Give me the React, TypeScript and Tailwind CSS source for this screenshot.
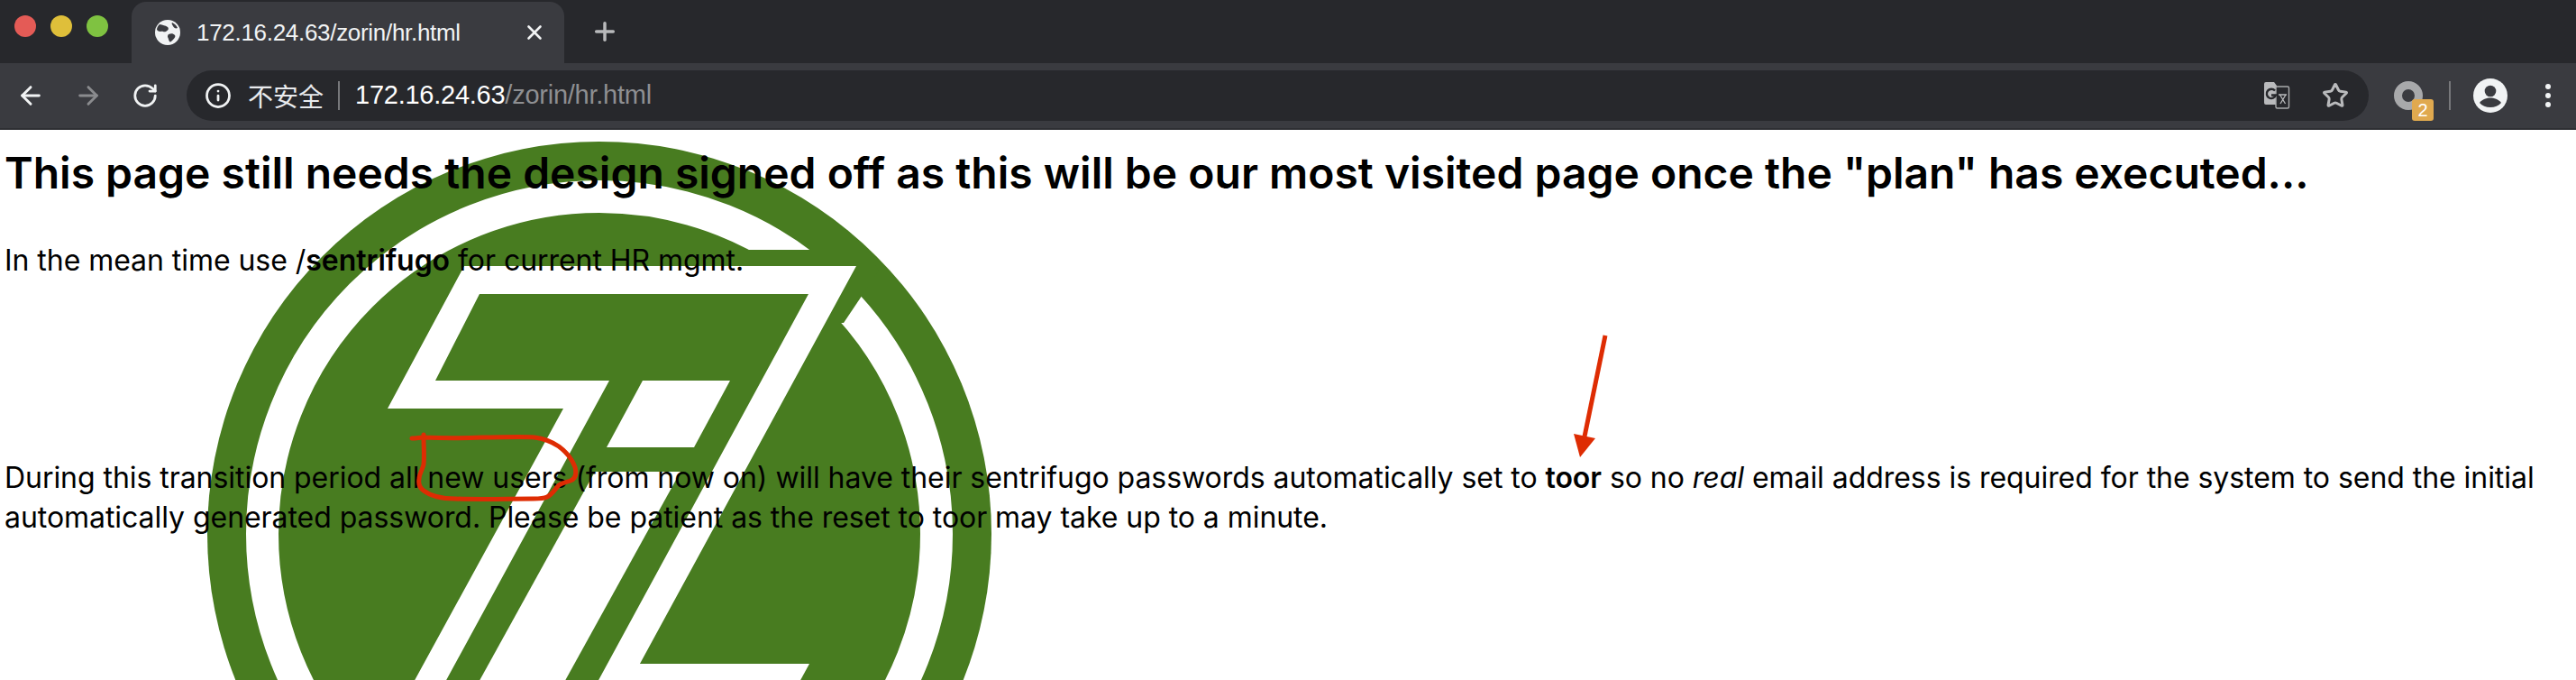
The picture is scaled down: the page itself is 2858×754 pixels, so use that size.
import React from "react";
import { ArrowLeft, ArrowRight, RotateCw, Star, X, Plus, Info } from "lucide-react";

const GREEN = "#487c20";
const RED = "#de2c03";

const GlobeIcon = () => (
  <svg width="28" height="28" viewBox="0 0 28 28" className="shrink-0">
    <circle cx="14" cy="14" r="14" fill="#f1f3f4" />
    <path d="M5 5c4 1 6 1 9 3 2 2 0 4-2 5-3 1-3-1-6 0-2 0-3-1-4-2 0-2 1-4 3-6z" fill="#3a3b40" />
    <path d="M15 16c3-1 5-1 7 1 1 1 0 3-2 5-2 2-3 3-4 2-1-2-1-3-2-5 0-1 0-2 1-3zM19 3c2 1 5 3 6 6-2 1-4 0-5-2s-2-3-1-4z" fill="#3a3b40" />
  </svg>
);

const TranslateIcon = () => (
  <svg width="30" height="30" viewBox="0 0 30 30">
    <path d="M1 2a2 2 0 0 1 2-2h9l3 4v21H3a2 2 0 0 1-2-2z" fill="#b9babc" />
    <rect x="14" y="5" width="14.500" height="24" rx="1.500" fill="#27282c" stroke="#a9aaac" strokeWidth="1.400" />
    <path d="M13 9.500a5.200 5.200 0 1 0 1 5h-5" fill="none" stroke="#27282c" strokeWidth="2.400" />
    <path d="M17 14h9M18.500 14l6 10M25 14l-6 10" stroke="#b9babc" strokeWidth="1.300" fill="none" />
  </svg>
);

const AvatarIcon = () => (
  <svg width="38" height="38" viewBox="0 0 38 38">
    <circle cx="19" cy="19" r="19" fill="#f1f3f4" />
    <circle cx="19" cy="14" r="6.300" fill="#3a3b40" />
    <path d="M7 27c3-4 8-5.500 12-5.500s9 1.500 12 5.500c-3 3.500-7 5-12 5s-9-1.500-12-5z" fill="#3a3b40" />
  </svg>
);

const PageArt = () => (
  <svg
    width="2858"
    height="610"
    viewBox="0 144 2858 610"
    className="absolute left-0 top-0"
  >
    <circle cx="665" cy="592" r="435" fill={GREEN} />
    <circle cx="665" cy="592" r="374" fill="none" stroke="#fff" strokeWidth="36" />
    <polygon points="827,277 960,277 975,300 936,358 827,358" fill={GREEN} />
    <polygon
      points="515,295 950,295 686,780 650,780 897,326 532,326 483,422 676,422 481,780 446,780 625,453 430,453"
      fill="#fff"
    />
    <polygon points="713,422 810,422 770,496 673,496" fill="#fff" />
    <polygon points="660,523 755,523 613,780 518,780" fill="#fff" />
    <polygon points="708,736 898,736 874,780 680,780" fill="#fff" />
  </svg>
);

const Annotations = () => (
  <svg
    width="2858"
    height="610"
    viewBox="0 144 2858 610"
    className="absolute left-0 top-0 z-20"
  >
    <path
      d="M457 486c5 0 9-1 13-1 20 1 45 1 65 0 20 0 45-1 58 0 9 1 18 4 27 10 8 6 14 12 18 23 2 8 0 13-5 15-5 2-9 2-13 5-4 4-7 10-13 13-4 2-9 2-15 2-25 0-60 1-87 0-15 0-27-3-35-9-4-3-6-8-5-13 0-5 4-11 5-16 1-10 0-20 0-30v-3"
      fill="none"
      stroke={RED}
      strokeWidth="5"
      strokeLinecap="round"
    />
    <line x1="1781" y1="372" x2="1758" y2="484" stroke={RED} strokeWidth="5" />
    <polygon points="1746,481 1770,486 1753,507" fill={RED} />
  </svg>
);

export default function App() {
  return (
    <div className="w-[2858px] h-[754px] overflow-hidden bg-white font-['Liberation_Sans',sans-serif]">
      {/* tab strip */}
      <div className="h-[70px] bg-[#27282c] flex items-end">
        <div className="flex items-center gap-[16px] pl-[16px] w-[146px] h-[70px] pb-[12px]">
          <span className="w-[24px] h-[24px] rounded-full bg-[#e45b56]" />
          <span className="w-[24px] h-[24px] rounded-full bg-[#dfbf3a]" />
          <span className="w-[24px] h-[24px] rounded-full bg-[#7fc241]" />
        </div>
        <div className="w-[480px] h-[68px] bg-[#3a3b40] rounded-t-[16px] flex items-center pl-[26px] pr-[20px] text-[#f1f3f4]">
          <GlobeIcon />
          <span className="ml-[18px] text-[26px] tracking-[-0.3px] whitespace-nowrap">
            172.16.24.63/zorin/hr.html
          </span>
          <X className="ml-auto" size={26} strokeWidth={2.4} />
        </div>
        <div className="h-[70px] flex items-center pl-[29px]">
          <Plus color="#b8b9bb" size={32} strokeWidth={2.6} />
        </div>
      </div>

      {/* toolbar */}
      <div className="h-[74px] bg-[#3a3b40] flex items-center border-b-[2px] border-[#2e2f33]">
        <div className="w-[207px] flex items-center pl-[18px] gap-[32px] text-[#f1f3f4]">
          <ArrowLeft size={32} strokeWidth={2.2} />
          <ArrowRight size={32} strokeWidth={2.2} color="#8a8b8e" />
          <RotateCw size={30} strokeWidth={2.2} />
        </div>
        <div className="w-[2421px] h-[56px] rounded-full bg-[#27282c] flex items-center pl-[20px] pr-[20px]">
          <Info size={30} strokeWidth={2.2} color="#f1f3f4" />
          <span className="ml-[18px] text-[28px] text-[#e8eaed] font-['Noto_Sans_CJK_SC','Liberation_Sans',sans-serif]">
            不安全
          </span>
          <span className="ml-[16px] w-[2px] h-[32px] bg-[#77787b]" />
          <span className="ml-[17px] text-[29px] tracking-[-0.25px] whitespace-nowrap text-[#8e8f92]">
            <span className="text-white">172.16.24.63</span>/zorin/hr.html
          </span>
          <div className="ml-auto flex items-center gap-[35px] pr-[2px]">
            <TranslateIcon />
            <Star size={30} strokeWidth={2.4} color="#b9babc" />
          </div>
        </div>
        <div className="relative ml-[28px] w-[32px] h-[32px] rounded-full border-[9px] border-[#a8a9ab]">
          <span className="absolute left-[11px] top-[11px] w-[24px] h-[24px] rounded-[3px] bg-[#e0a94f] text-white text-[20px] leading-[24px] text-center">
            2
          </span>
        </div>
        <span className="ml-[29px] w-[2px] h-[32px] bg-[#77787b]" />
        <div className="ml-[25px]">
          <AvatarIcon />
        </div>
        <div className="ml-[42px] flex flex-col gap-[4px]">
          <span className="w-[6px] h-[6px] rounded-full bg-[#f1f3f4]" />
          <span className="w-[6px] h-[6px] rounded-full bg-[#f1f3f4]" />
          <span className="w-[6px] h-[6px] rounded-full bg-[#f1f3f4]" />
        </div>
      </div>

      {/* page */}
      <div className="relative h-[610px] overflow-hidden bg-white text-black font-['Inter',sans-serif]">
        <PageArt />
        <div className="relative z-10 pl-[5px] pr-[5px]">
          <h1 className="pt-[20px] text-[48px] leading-[56px] font-semibold whitespace-nowrap">
            This page still needs the design signed off as this will be our most visited page once the "plan" has executed...
          </h1>
          <p className="mt-[47px] text-[32px] leading-[44px] tracking-[-0.05px]">
            In the mean time use /<b className="font-semibold">sentrifugo</b> for current HR mgmt.
          </p>
          <p className="mt-[197px] text-[32px] leading-[44px] tracking-[-0.05px]">
            During this transition period all new users (from now on) will have their sentrifugo passwords automatically set to <b className="font-semibold">toor</b> so no <i>real</i> email address is required for the system to send the initial automatically generated password. Please be patient as the reset to toor may take up to a minute.
          </p>
        </div>
        <Annotations />
      </div>
    </div>
  );
}
